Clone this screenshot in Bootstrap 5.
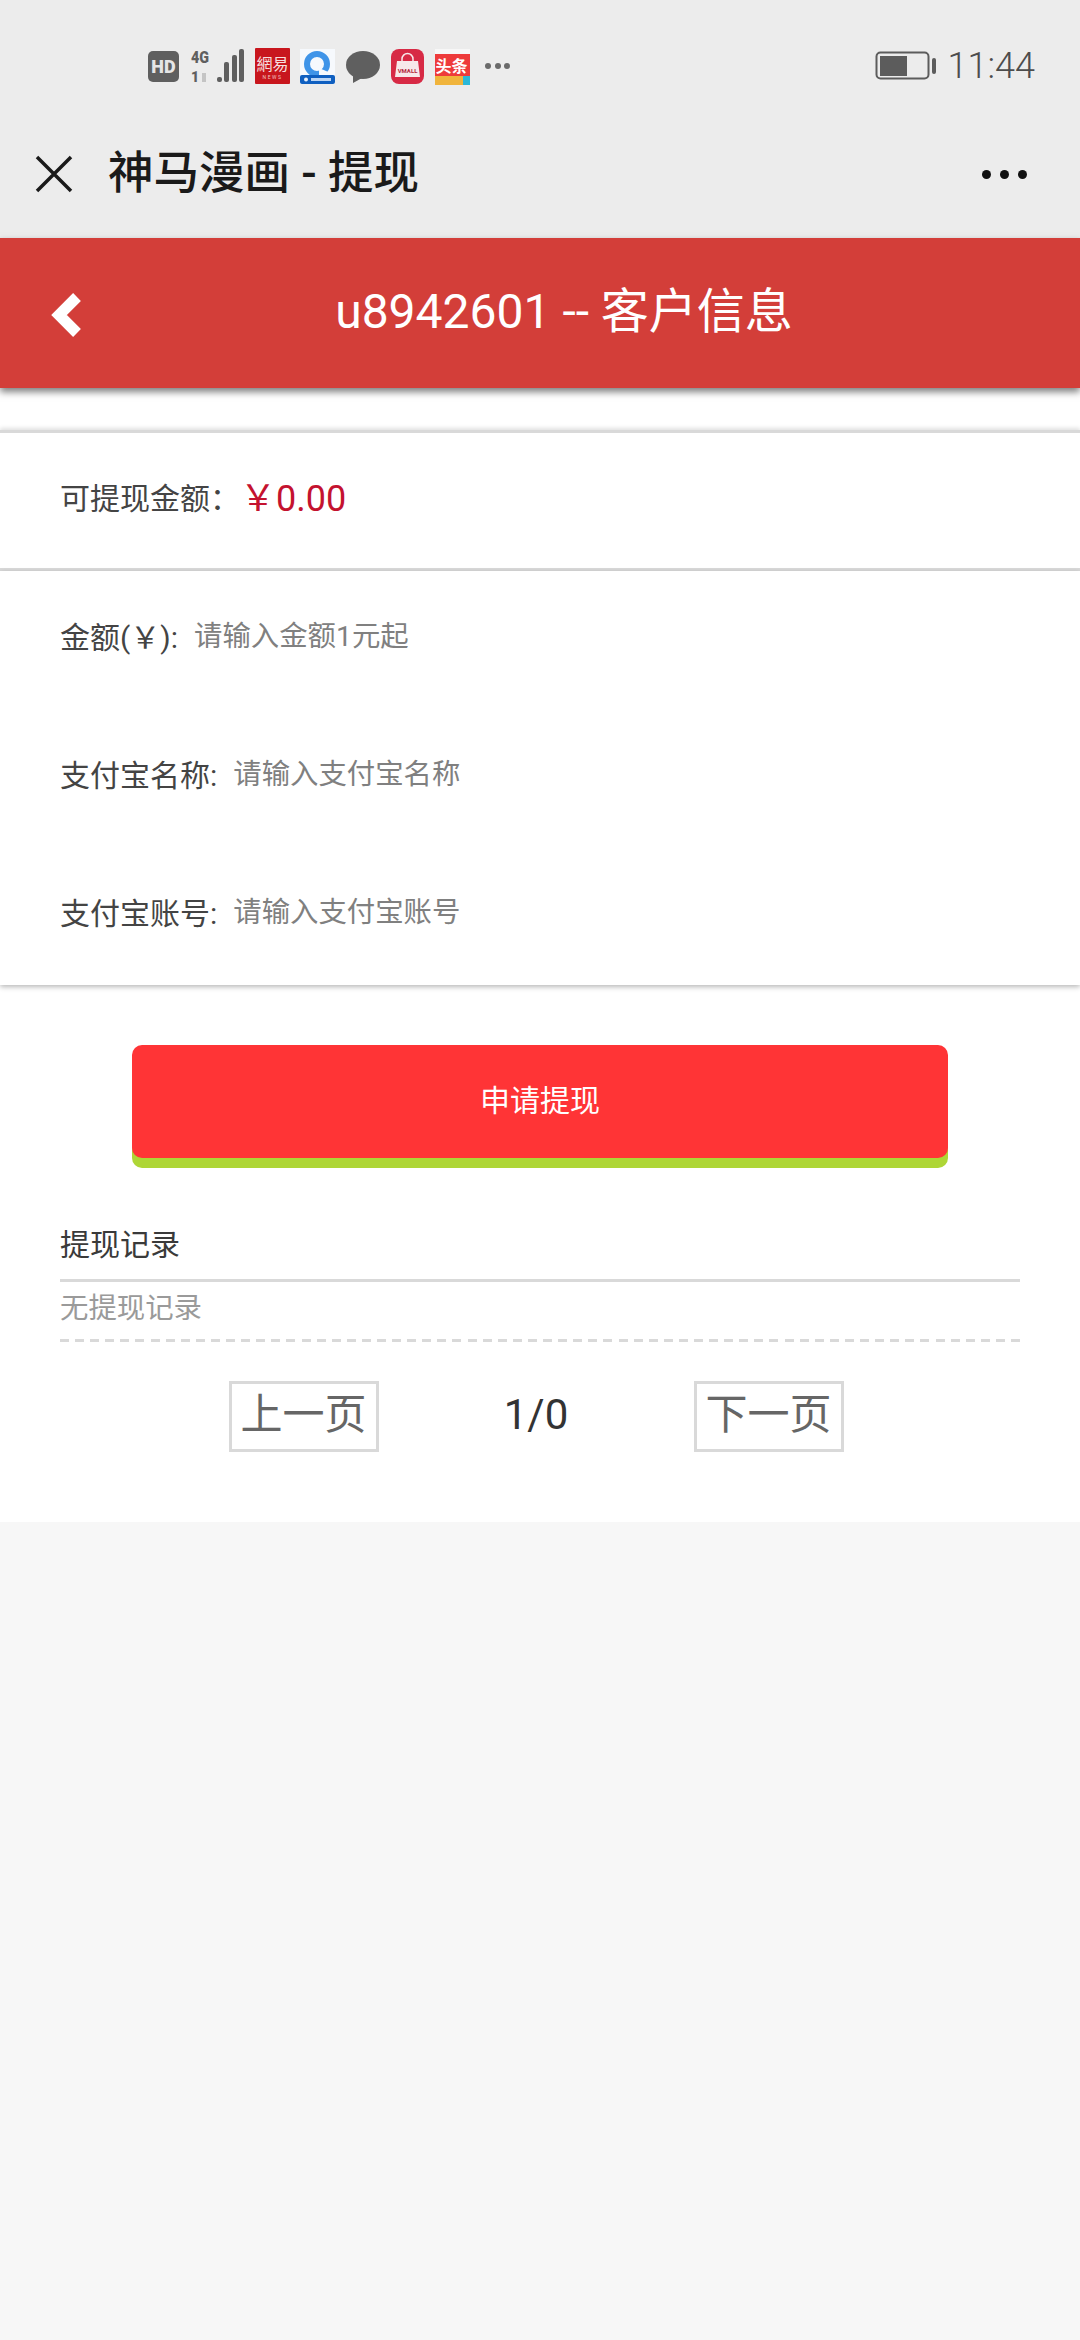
<!DOCTYPE html>
<html lang="zh">
<head>
    <meta charset="UTF-8">
    <meta name="viewport" content="width=device-width, initial-scale=1.0">
    <title>神马漫画 - 提现</title>
    <link rel="stylesheet" href="https://cdn.jsdelivr.net/npm/bootstrap@5.3.3/dist/css/bootstrap.min.css">
    <style>
        body {
            background-color: #f7f7f7;
            font-family: Roboto, "Noto Sans CJK SC", sans-serif;
            margin: 0;
            min-height: 2340px;
        }

        /* phone status bar + wechat title bar */
        .status-strip {
            height: 106px;
            background-color: #ececec;
            padding: 26px 45px 0 147px;
        }

        .status-clock {
            gap: 11px;
        }

        .status-time {
            font-size: 36px;
            font-weight: 300;
            color: #4c4c4c;
            line-height: 1;
        }

        .wx-bar {
            height: 132px;
            background-color: #ececec;
            padding: 4px 53px 0 35px;
        }

        .wx-title {
            font-size: 45.5px;
            font-weight: 500;
            color: #1a1a1a;
            margin-left: 35px;
            line-height: 1;
        }

        .wx-dots {
            gap: 9px;
        }

        .wx-dots span {
            width: 9px;
            height: 9px;
            border-radius: 50%;
            background-color: #111;
        }

        /* red page header */
        .page-head {
            height: 150px;
            background-color: #d33e39;
            box-shadow: 0 4px 7px rgba(0, 0, 0, .5);
            padding: 0 0 2px 48px;
            position: relative;
            z-index: 2;
        }

        .page-head-title {
            font-size: 48px;
            color: #fff;
            line-height: 1;
        }

        .back-arrow {
            position: absolute;
            left: 51px;
            top: 54px;
        }

        .white-panel {
            background-color: #fff;
            padding-top: 42px;
        }

        .balance-row {
            height: 141px;
            background-color: #fff;
            border-top: 3px solid #d9d9d9;
            border-bottom: 3px solid #d9d9d9;
            box-shadow: 0 -2px 4px rgba(0, 0, 0, .12);
            padding: 0 60px 3px;
        }

        .field-label {
            font-size: 30px;
            color: #444;
            line-height: 1;
        }

        .balance-num {
            font-size: 36px;
            color: #c4122f;
            line-height: 1;
        }

        .form-panel {
            height: 414px;
            padding: 0 60px;
            background-color: #fff;
            box-shadow: 0 2px 5px rgba(0, 0, 0, .28);
            position: relative;
            z-index: 1;
        }

        .form-line {
            height: 138px;
            padding-top: 52px;
        }

        .form-line label {
            margin-right: 16px;
        }

        .plain-input {
            border: 0;
            outline: 0;
            padding: 0;
            font-size: 28.4px;
            line-height: 1;
            height: 34px;
            flex: 1;
            margin-top: -4px;
            background: transparent;
        }

        .plain-input::placeholder {
            color: #808080;
            opacity: 1;
        }

        .lower-panel {
            background-color: #fff;
            height: 537px;
            padding: 60px 60px 0;
        }

        .apply-btn {
            display: block;
            width: 816px;
            height: 113px;
            margin: 0 auto;
            background-color: #ff3436;
            color: #fff;
            font-size: 30px;
            border: 0;
            border-radius: 10px;
            box-shadow: 0 10px 0 #aed636;
            padding: 0 0 3px;
        }

        .records-head {
            margin-top: 72px;
            font-size: 30px;
            color: #3a3a3a;
            line-height: 1;
            padding-bottom: 19px;
            border-bottom: 3px solid #d9d9d9;
        }

        .records-empty {
            font-size: 28.4px;
            color: #9a9a9a;
            line-height: 1;
            padding: 13px 0 16px;
        }

        .dash-rule {
            height: 3px;
            background-image: repeating-linear-gradient(to right, #d9d9d9 0 9px, transparent 9px 15.095px);
        }

        .pager {
            margin-top: 39px;
            padding-right: 8px;
        }

        .pager-btn {
            width: 150px;
            height: 71px;
            border: 3px solid #d9d9d9;
            background: #fff;
            color: #666;
            font-size: 42px;
            padding: 0 0 4px;
            line-height: 1;
        }

        .pager-count {
            width: 315px;
            font-size: 42px;
            color: #333;
            line-height: 1;
            padding-bottom: 4px;
        }
    </style>
</head>
<body>

<div class="status-strip d-flex align-items-center justify-content-between">
    <svg width="370" height="40" viewBox="0 0 370 40">
        <!-- HD -->
        <rect x="1" y="5" width="31" height="31" rx="5" fill="#5f5f5f"/>
        <text x="16.500" y="27" font-family="Roboto" font-weight="900" font-size="18" fill="#e6e6e6" text-anchor="middle">HD</text>
        <!-- 4G + signal -->
        <text x="44" y="17" font-family="Roboto" font-weight="900" font-size="17" textLength="18" lengthAdjust="spacingAndGlyphs" fill="#5f5f5f">4G</text>
        <text x="44" y="36" font-family="Roboto" font-weight="900" font-size="14" fill="#5f5f5f">1</text>
        <rect x="55" y="27" width="4" height="9" fill="#c4c4c4"/>
        <rect x="70" y="31" width="5" height="5" rx="2" fill="#5f5f5f"/>
        <rect x="77" y="16" width="5" height="20" rx="2" fill="#5f5f5f"/>
        <rect x="85" y="9" width="5" height="27" rx="2" fill="#5f5f5f"/>
        <rect x="92" y="3" width="5" height="33" rx="2" fill="#5f5f5f"/>
        <!-- netease news -->
        <rect x="108" y="2" width="35" height="36" rx="1" fill="#c8161d"/>
        <text x="125.500" y="24" font-family="'Noto Sans CJK TC'" font-size="16" fill="#f6dede" text-anchor="middle">網易</text>
        <text x="125.500" y="33" font-family="Roboto" font-size="5" letter-spacing="1.500" fill="#f0c0c0" text-anchor="middle">NEWS</text>
        <!-- blue ring app -->
        <rect x="153" y="3" width="35" height="35" fill="#f6f9fd"/>
        <circle cx="170" cy="18" r="10" fill="none" stroke="#3f94e8" stroke-width="6"/>
        <path d="M172 22 L186 28 L172 30 Z" fill="#f6f9fd"/>
        <rect x="153" y="29" width="35" height="9" rx="2" fill="#0f5fc0"/>
        <circle cx="159" cy="33.500" r="2" fill="#e8f0fb"/>
        <rect x="164" y="32" width="20" height="3" fill="#bcd6f5"/>
        <!-- chat bubble -->
        <ellipse cx="216" cy="19" rx="17" ry="14" fill="#5f5f5f"/>
        <path d="M206 28 L206 37 L215 32 Z" fill="#5f5f5f"/>
        <!-- vmall -->
        <rect x="244" y="3" width="33" height="35" rx="8" fill="#d72a45"/>
        <path d="M250 15 h21 l2 16 h-25 Z" fill="#f7e8ea"/>
        <path d="M255 17 v-4 a5.500 5.500 0 0 1 11 0 v4" fill="none" stroke="#f7e8ea" stroke-width="1.500"/>
        <text x="260.500" y="27" font-family="Roboto" font-weight="700" font-size="6" fill="#b5283c" text-anchor="middle">VMALL</text>
        <!-- toutiao -->
        <rect x="288" y="3" width="35" height="5" fill="#f7f7f7"/>
        <rect x="288" y="8" width="35" height="24" fill="#ee3b3b"/>
        <rect x="288" y="30" width="35" height="9" fill="#f0b43c"/>
        <rect x="316" y="30" width="7" height="9" fill="#2bb8d8"/>
        <text x="304.500" y="26" font-family="'Noto Sans CJK SC'" font-weight="700" font-size="16" fill="#fff" text-anchor="middle">头条</text>
        <!-- more -->
        <circle cx="341" cy="20" r="3" fill="#6a6a6a"/>
        <circle cx="351" cy="20" r="3" fill="#6a6a6a"/>
        <circle cx="360" cy="20" r="3" fill="#6a6a6a"/>
    </svg>
    <div class="status-clock d-flex align-items-center">
        <svg width="62" height="30" viewBox="0 0 62 30">
            <rect x="1.500" y="1.500" width="52" height="26" rx="4" fill="none" stroke="#5c5c5c" stroke-width="2"/>
            <rect x="5" y="5" width="27" height="20" fill="#5c5c5c"/>
            <rect x="57" y="7" width="4" height="16" rx="2" fill="#5c5c5c"/>
        </svg>
        <span class="status-time">11:44</span>
    </div>
</div>

<div class="wx-bar d-flex align-items-center justify-content-between">
    <div class="d-flex align-items-center">
        <svg width="38" height="38" viewBox="0 0 38 38">
            <path d="M2 2 L36 36 M36 2 L2 36" stroke="#1a1a1a" stroke-width="3.500" fill="none"/>
        </svg>
        <span class="wx-title">神马漫画 - 提现</span>
    </div>
    <div class="wx-dots d-flex"><span></span><span></span><span></span></div>
</div>

<div class="page-head d-flex align-items-center justify-content-center">
    <svg class="back-arrow" width="34" height="46" viewBox="0 0 34 46">
        <path d="M26 5 L8 23 L26 41" fill="none" stroke="#fff" stroke-width="11"/>
    </svg>
    <span class="page-head-title">u8942601 -- 客户信息</span>
</div>

<div class="white-panel">
    <div class="balance-row d-flex align-items-center">
        <span class="field-label">可提现金额：</span>
        <span class="balance-num">￥0.00</span>
    </div>

    <form class="form-panel">
        <div class="form-line d-flex align-items-start">
            <label class="field-label">金额(￥):</label>
            <input class="plain-input" type="text" placeholder="请输入金额1元起">
        </div>
        <div class="form-line d-flex align-items-start">
            <label class="field-label">支付宝名称:</label>
            <input class="plain-input" type="text" placeholder="请输入支付宝名称">
        </div>
        <div class="form-line d-flex align-items-start">
            <label class="field-label">支付宝账号:</label>
            <input class="plain-input" type="text" placeholder="请输入支付宝账号">
        </div>
    </form>

    <div class="lower-panel">
        <button class="apply-btn" type="button">申请提现</button>
        <div class="records-head">提现记录</div>
        <div class="records-empty">无提现记录</div>
        <div class="dash-rule"></div>
        <div class="pager d-flex justify-content-center align-items-center">
            <button class="pager-btn" type="button">上一页</button>
            <span class="pager-count text-center">1/0</span>
            <button class="pager-btn" type="button">下一页</button>
        </div>
    </div>
</div>

<script src="https://cdn.jsdelivr.net/npm/bootstrap@5.3.3/dist/js/bootstrap.bundle.min.js"></script>
</body>
</html>
